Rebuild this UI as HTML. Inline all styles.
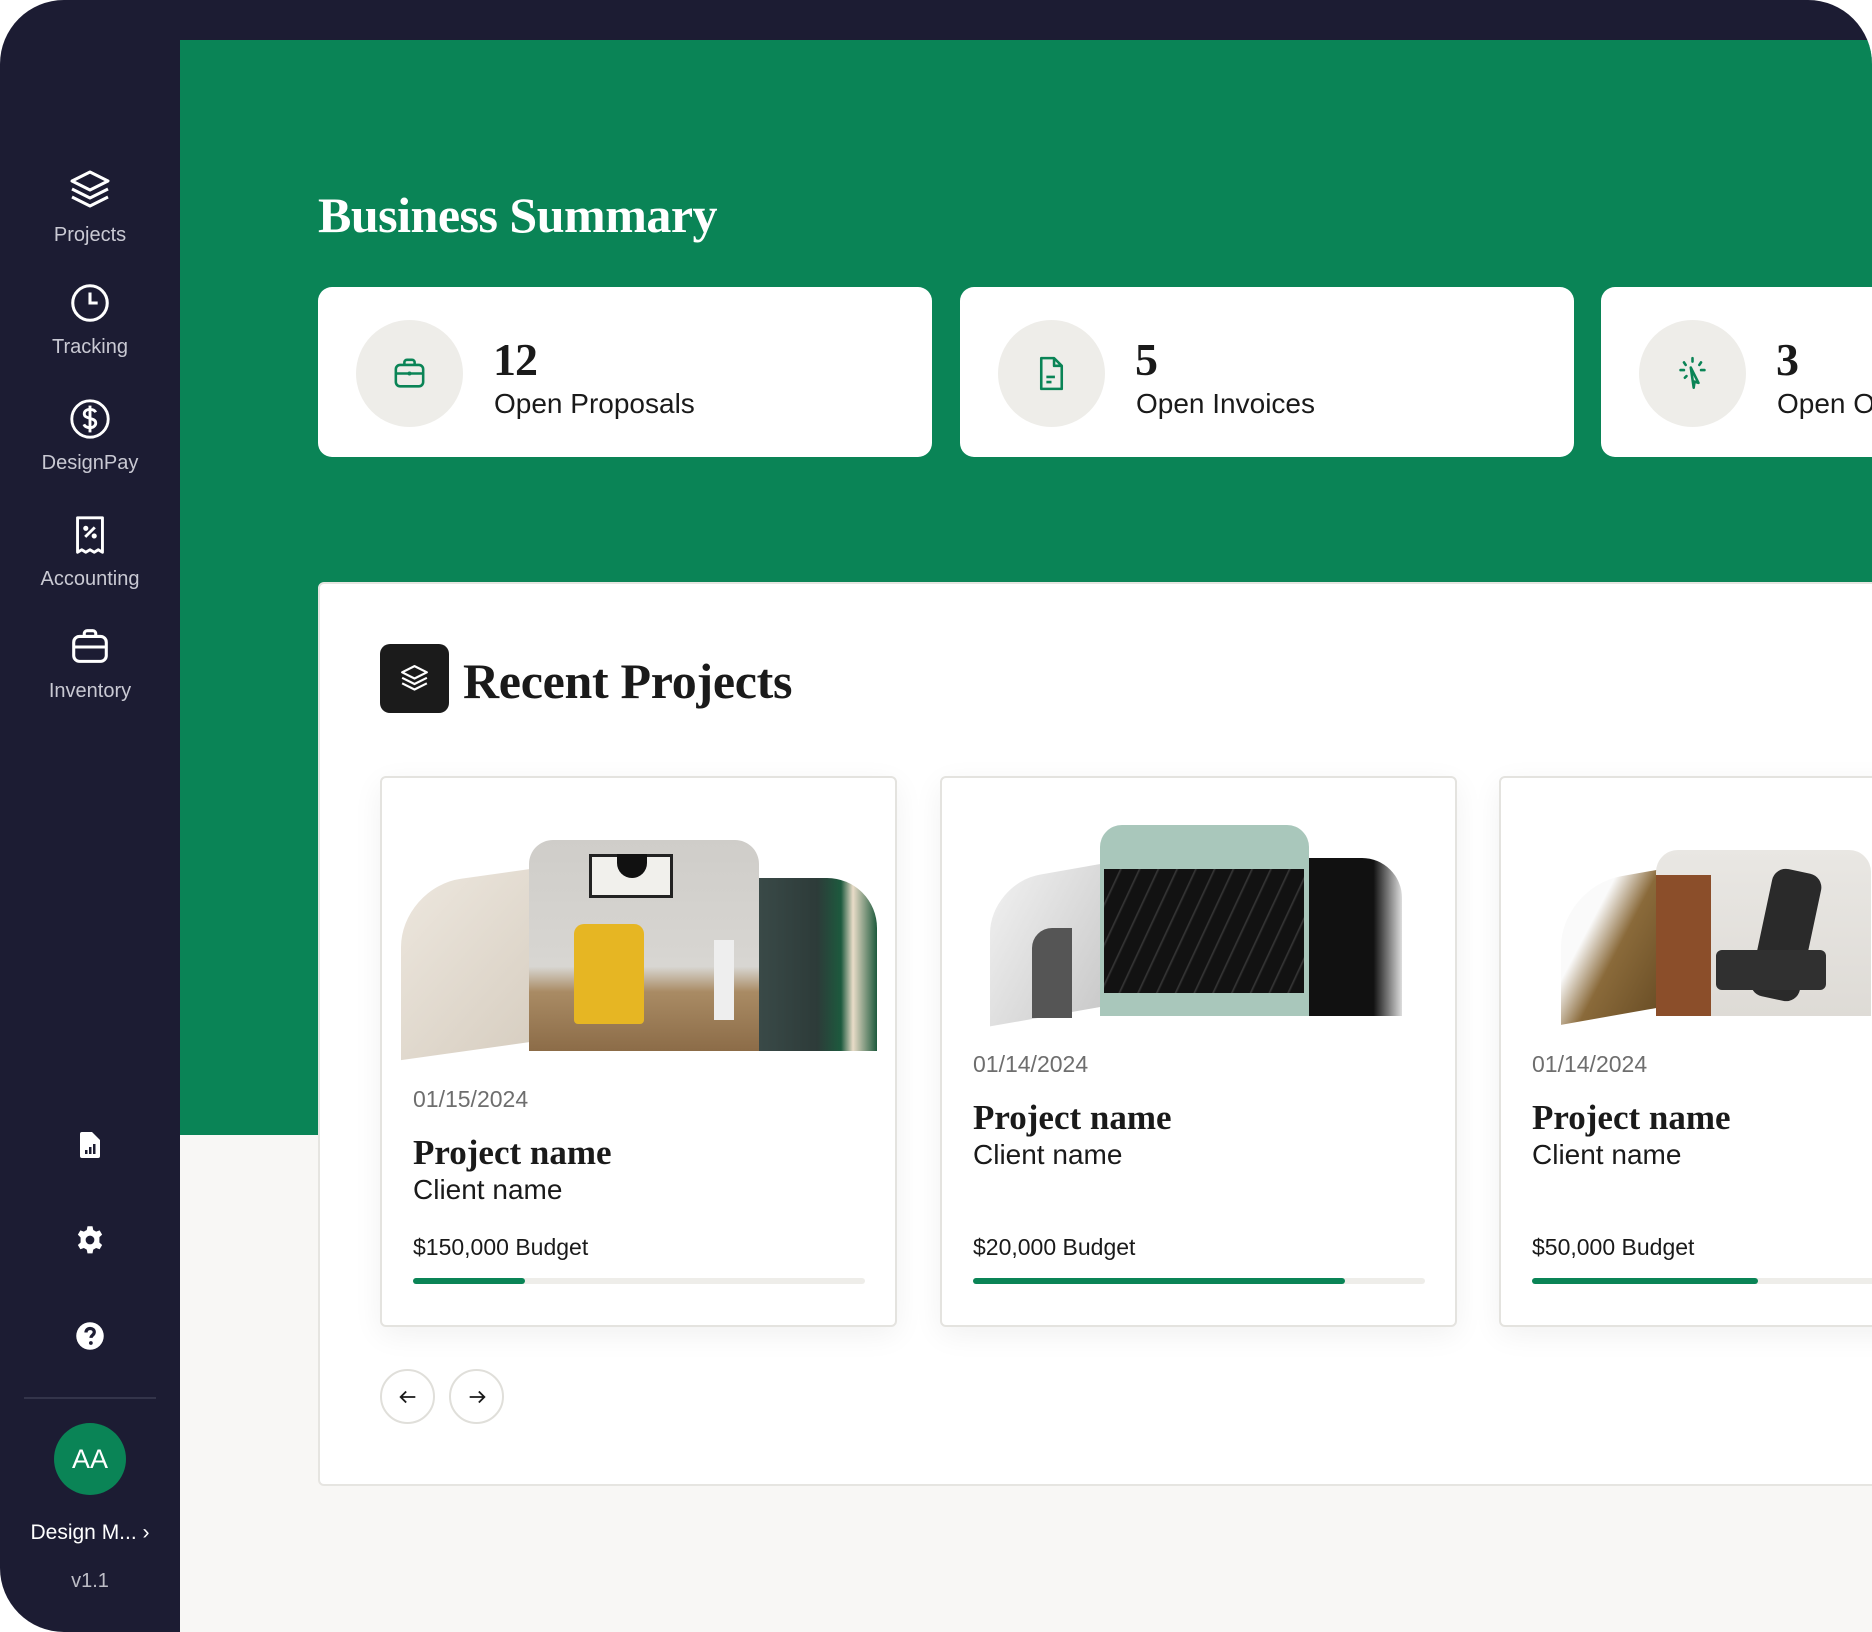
<!DOCTYPE html>
<html><head><meta charset="utf-8"><style>
*{margin:0;padding:0;box-sizing:border-box}
body{width:1872px;height:1632px;background:#fff;position:relative;overflow:hidden;font-family:"Liberation Sans",sans-serif}
.frame{position:absolute;left:0;top:0;width:1872px;height:1632px;background:#1c1c33;border-radius:64px 64px 0 64px;overflow:hidden}
.bg{position:absolute;left:180px;top:40px;right:0;bottom:0;background:#f8f7f5}
.green{position:absolute;left:180px;top:40px;right:0;height:1095px;background:#0a8456}
.abs{position:absolute}
.nav{position:absolute;left:0;width:180px;text-align:center;color:#c9c9d3;font-size:20px}
.nav svg{display:block;margin:0 auto 10px}
.serif{font-family:"Liberation Serif",serif;font-weight:bold}
.card{position:absolute;top:287px;height:170px;width:614px;background:#fff;border-radius:14px}
.circ{position:absolute;left:38px;top:33px;width:107px;height:107px;border-radius:50%;background:#eeede9}
.circ svg{position:absolute;left:33px;top:33px}
.num{position:absolute;left:175px;top:46px;font-size:46px;color:#1a1a1a;letter-spacing:-1px}
.lbl{position:absolute;left:176px;top:101px;font-size:28px;color:#1a1a1a}
.panel{position:absolute;left:318px;top:582px;width:1600px;height:904px;background:#fff;border:2px solid #e6e5e1;border-radius:6px}
.pc{position:absolute;top:776px;width:517px;height:551px;background:#fff;border:2px solid #e4e3df;border-radius:6px;box-shadow:0 8px 30px rgba(0,0,0,.06)}
.date{position:absolute;left:31px;font-size:23px;color:#6e6e6e}
.pn{position:absolute;left:31px;font-size:35px;color:#1a1a1a}
.cn{position:absolute;left:31px;font-size:28px;color:#1a1a1a}
.bud{position:absolute;left:31px;top:456px;font-size:23px;color:#1a1a1a}
.bar{position:absolute;left:31px;top:500px;width:452px;height:6px;border-radius:3px;background:#eeede9}
.bar i{display:block;height:6px;border-radius:3px;background:#0a8456}
.arr{position:absolute;top:1369px;width:55px;height:55px;border:2px solid #e0dfda;border-radius:50%;background:#fff}
.arr svg{position:absolute;left:15px;top:15px}
</style></head><body>
<div class="frame">
<div class="bg"></div>
<div class="green"></div>

<div class="nav" style="top:166px"><svg width="48" height="48" viewBox="0 0 24 24" fill="none" stroke="#fff" stroke-width="1.5" stroke-linejoin="round"><path d="M12 3l9 4.5-9 4.5-9-4.5z"/><path d="M3 11.5l9 4.5 9-4.5"/><path d="M3 15.5l9 4.5 9-4.5"/></svg>Projects</div>
<div class="nav" style="top:280px"><svg width="46" height="46" viewBox="0 0 24 24" fill="none" stroke="#fff" stroke-width="1.6"><circle cx="12" cy="12" r="9"/><path d="M12 6.5V12h4"/></svg>Tracking</div>
<div class="nav" style="top:396px"><svg width="46" height="46" viewBox="0 0 24 24" fill="none" stroke="#fff" stroke-width="1.5"><circle cx="12" cy="12" r="9.5"/><path d="M15 8.5c-.5-1-1.6-1.5-3-1.5-1.8 0-3 .9-3 2.3 0 3 6 1.7 6 4.8 0 1.4-1.3 2.4-3 2.4-1.5 0-2.7-.6-3.2-1.7M12 5v14"/></svg>DesignPay</div>
<div class="nav" style="top:512px"><svg width="46" height="46" viewBox="0 0 24 24" fill="none" stroke="#fff" stroke-width="1.5" stroke-linejoin="round"><path d="M5.5 3h13v18l-2.2-1.3-2.1 1.3-2.2-1.3-2.2 1.3-2.1-1.3-2.2 1.3z"/><path d="M9.5 13l5-5"/><circle cx="9.8" cy="8.5" r=".6" fill="#fff"/><circle cx="14.2" cy="12.5" r=".6" fill="#fff"/></svg>Accounting</div>
<div class="nav" style="top:624px"><svg width="46" height="46" viewBox="0 0 24 24" fill="none" stroke="#fff" stroke-width="1.6"><rect x="3.5" y="6.5" width="17" height="13" rx="3"/><path d="M9 6.5V5a1.5 1.5 0 011.5-1.5h3A1.5 1.5 0 0115 5v1.5M3.5 12h17"/></svg>Inventory</div>

<svg class="abs" style="left:78px;top:1131px" width="24" height="28" viewBox="0 0 24 28"><path d="M2 3a2 2 0 012-2h10l8 8v16a2 2 0 01-2 2H4a2 2 0 01-2-2z" fill="#fff"/><rect x="7" y="19" width="2.5" height="4" fill="#1c1c33"/><rect x="11" y="16" width="2.5" height="7" fill="#1c1c33"/><rect x="15" y="13" width="2.5" height="10" fill="#1c1c33"/></svg>
<svg class="abs" style="left:75px;top:1225px" width="30" height="30" viewBox="0 0 24 24"><path fill="#fff" fill-rule="evenodd" d="M10 1h4l.6 3 2.3 1.3 2.8-1 2 3.4-2.2 2V14l2.2 2-2 3.4-2.8-1-2.3 1.3-.6 3h-4l-.6-3-2.3-1.3-2.8 1-2-3.4 2.2-2V10L2.3 7.7l2-3.4 2.8 1L9.4 4zM12 8.5a3.5 3.5 0 100 7 3.5 3.5 0 000-7z"/></svg>
<svg class="abs" style="left:75px;top:1321px" width="30" height="30" viewBox="0 0 24 24"><circle cx="12" cy="12" r="11" fill="#fff"/><path d="M8.8 9.2c0-1.9 1.4-3.2 3.3-3.2s3.3 1.2 3.3 2.9c0 2.4-2.6 2.5-2.6 4.6" fill="none" stroke="#1c1c33" stroke-width="2.6"/><circle cx="12.7" cy="17.6" r="1.5" fill="#1c1c33"/></svg>
<div class="abs" style="left:24px;top:1397px;width:132px;height:2px;background:#33344a"></div>
<div class="abs" style="left:54px;top:1423px;width:72px;height:72px;border-radius:50%;background:#0a8456;color:#fff;font-size:27px;text-align:center;line-height:72px">AA</div>
<div class="abs" style="left:0;width:180px;top:1521px;text-align:center;color:#fff;font-size:21px">Design M... ›</div>
<div class="abs" style="left:0;width:180px;top:1570px;text-align:center;color:#bdbdc6;font-size:20px">v1.1</div>

<div class="abs serif" style="left:318px;top:186px;font-size:50px;color:#fff;letter-spacing:-0.5px">Business Summary</div>

<div class="card" style="left:318px"><div class="circ"><svg width="41" height="41" viewBox="0 0 24 24" fill="none" stroke="#0a8456" stroke-width="1.5"><rect x="4" y="7" width="16" height="12.5" rx="2.5"/><path d="M9 7V5.5A1.5 1.5 0 0110.5 4h3A1.5 1.5 0 0115 5.5V7M4 12h16"/><circle cx="12" cy="12" r=".4" fill="#0a8456"/></svg></div><div class="num serif">12</div><div class="lbl">Open Proposals</div></div>
<div class="card" style="left:960px"><div class="circ"><svg width="41" height="41" viewBox="0 0 24 24" fill="none" stroke="#0a8456" stroke-width="1.5" stroke-linejoin="round"><path d="M6 3h7.5L18 7.5V21H6z"/><path d="M13.5 3v4.5H18M9 14h5M9 17h3"/></svg></div><div class="num serif">5</div><div class="lbl">Open Invoices</div></div>
<div class="card" style="left:1601px"><div class="circ"><svg width="41" height="41" viewBox="0 0 24 24" fill="none" stroke="#0a8456" stroke-width="1.5" stroke-linecap="round"><path d="M12 3v2M7 5.5l1 1.5M17 5.5l-1 1.5M5 10h2M17 10h2M7.5 14.5l1-1"/><path d="M11 8.5l4.5 9-2.3-.8-.5 3.6z" stroke-linejoin="round"/></svg></div><div class="num serif">3</div><div class="lbl">Open O</div></div>

<div class="panel"></div>
<div class="abs" style="left:380px;top:644px;width:69px;height:69px;border-radius:10px;background:#1b1b1b"><svg style="position:absolute;left:18px;top:18px" width="33" height="33" viewBox="0 0 24 24" fill="none" stroke="#fff" stroke-width="1.6" stroke-linejoin="round"><path d="M12 3l9 4.5-9 4.5-9-4.5z"/><path d="M3 11.5l9 4.5 9-4.5"/><path d="M3 15.5l9 4.5 9-4.5"/></svg></div>
<div class="abs serif" style="left:463px;top:652px;font-size:50px;color:#1a1a1a;letter-spacing:-0.3px">Recent Projects</div>

<!-- card 1 -->
<div class="pc" style="left:380px">
 <div class="abs" style="left:19px;top:100px;width:130px;height:173px;background:linear-gradient(135deg,#ece6dd,#d8cfc2);border-radius:60px 0 0 0;transform:skewY(-8deg)"></div>
 <div class="abs" style="left:375px;top:100px;width:120px;height:173px;background:linear-gradient(90deg,#3a4a48 0,#2d3b39 50%,#1d5a3e 70%,#e9dcc8 80%,#1e5a3c 100%);border-radius:0 50px 0 0"></div>
 <div class="abs" style="left:147px;top:62px;width:230px;height:211px;border-radius:24px 24px 0 0;overflow:hidden;background:linear-gradient(180deg,#cfcdc9 0,#d8d6d2 60%,#a98b64 72%,#8c6c48 100%)">
  <div class="abs" style="left:60px;top:14px;width:84px;height:44px;background:#f1f0ec;border:3px solid #222"></div>
  <div class="abs" style="left:88px;top:14px;width:30px;height:24px;border-radius:0 0 15px 15px;background:#111"></div>
  <div class="abs" style="left:45px;top:84px;width:70px;height:100px;background:#e6b623;border-radius:10px 10px 4px 4px"></div>
  <div class="abs" style="left:185px;top:100px;width:20px;height:80px;background:#eee"></div>
 </div>
 <div class="date" style="top:308px">01/15/2024</div>
 <div class="pn serif" style="top:355px">Project name</div>
 <div class="cn" style="top:396px">Client name</div>
 <div class="bud">$150,000 Budget</div>
 <div class="bar"><i style="width:112px"></i></div>
</div>

<!-- card 2 -->
<div class="pc" style="left:940px">
 <div class="abs" style="left:48px;top:95px;width:118px;height:143px;background:linear-gradient(120deg,#f0f0f0,#c9c9c9);border-radius:50px 0 0 0;transform:skewY(-10deg)"></div>
 <div class="abs" style="left:90px;top:150px;width:40px;height:90px;background:#555;border-radius:20px 0 0 0"></div>
 <div class="abs" style="left:365px;top:80px;width:95px;height:158px;background:linear-gradient(90deg,#111 0,#111 70%,#ddd 100%);border-radius:0 40px 0 0"></div>
 <div class="abs" style="left:158px;top:47px;width:209px;height:191px;border-radius:22px 22px 0 0;overflow:hidden;background:#a9c7bb">
  <div class="abs" style="left:4px;top:44px;width:200px;height:124px;background:repeating-linear-gradient(115deg,#121212 0,#121212 14px,#3a3a3a 15px,#121212 17px)"></div>
 </div>
 <div class="date" style="top:273px">01/14/2024</div>
 <div class="pn serif" style="top:320px">Project name</div>
 <div class="cn" style="top:361px">Client name</div>
 <div class="bud">$20,000 Budget</div>
 <div class="bar"><i style="width:372px"></i></div>
</div>

<!-- card 3 -->
<div class="pc" style="left:1499px">
 <div class="abs" style="left:60px;top:100px;width:100px;height:138px;background:linear-gradient(120deg,#fafafa 30%,#8a6a3a 55%,#6a4e26);border-radius:60px 0 0 0;transform:skewY(-10deg)"></div>
 <div class="abs" style="left:155px;top:72px;width:215px;height:166px;border-radius:22px 22px 0 0;overflow:hidden;background:linear-gradient(180deg,#e9e7e3,#dedbd6)">
  <div class="abs" style="left:0;top:25px;width:55px;height:141px;background:#8b4e2a"></div>
  <div class="abs" style="left:105px;top:20px;width:50px;height:130px;background:#2a2a2a;border-radius:14px;transform:rotate(12deg)"></div>
  <div class="abs" style="left:60px;top:100px;width:110px;height:40px;background:#303030;border-radius:6px"></div>
 </div>
 <div class="date" style="top:273px">01/14/2024</div>
 <div class="pn serif" style="top:320px">Project name</div>
 <div class="cn" style="top:361px">Client name</div>
 <div class="bud">$50,000 Budget</div>
 <div class="bar"><i style="width:226px"></i></div>
</div>

<div class="arr" style="left:380px"><svg width="22" height="22" viewBox="0 0 24 24" fill="none" stroke="#1a1a1a" stroke-width="2"><path d="M20 12H4M10 6l-6 6 6 6"/></svg></div>
<div class="arr" style="left:449px"><svg width="22" height="22" viewBox="0 0 24 24" fill="none" stroke="#1a1a1a" stroke-width="2"><path d="M4 12h16M14 6l6 6-6 6"/></svg></div>
</div>
</body></html>
